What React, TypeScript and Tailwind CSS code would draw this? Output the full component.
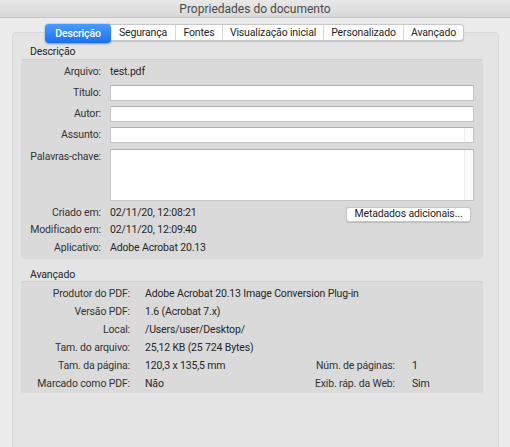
import React from "react";

const tabs = [
  { name: "Descrição", w: 66, active: true },
  { name: "Segurança", w: 64 },
  { name: "Fontes", w: 47 },
  { name: "Visualização inicial", w: 101 },
  { name: "Personalizado", w: 80 },
  { name: "Avançado", w: 60 },
];

function Label({ children, top = false }: { children: React.ReactNode; top?: boolean }) {
  return (
    <div className={`w-[80px] shrink-0 text-right text-[#333333] ${top ? "self-start pt-[1px]" : ""}`}>{children}</div>
  );
}

function Field() {
  return <div className="flex-1 h-[16px] bg-white border border-[#c4c4c4] border-t-[#b0b0b0]" />;
}

export default function App() {
  return (
    <div
      className="w-[510px] h-[447px] overflow-hidden whitespace-nowrap bg-[#ececec] text-[10.5px] tracking-[-0.15px] leading-[14px] text-[#262626]"
      style={{ fontFamily: "Roboto, 'Liberation Sans', sans-serif" }}
    >
      {/* title bar */}
      <div className="h-[18px] bg-gradient-to-b from-[#e8e8e8] to-[#d9d9d9] border-b border-[#c3c3c3] flex items-center justify-center text-[12px] tracking-[0px] text-[#4a4a4a]">
        Propriedades do documento
      </div>

      <div className="pl-[12px] pr-[11px] pt-[6px]">
        {/* tabs */}
        <div className="relative z-10 flex justify-start pl-[33px] h-[17px]">
          <div className="flex h-[17px] rounded-[4px] bg-white border border-[#c8c8c8] shadow-[0_0.5px_1px_rgba(0,0,0,0.15)]">
            {tabs.map((t, i) =>
              t.active ? (
                <div
                  key={t.name}
                  className="-my-[1px] -ml-[1px] h-[19px] flex items-center justify-center rounded-[4px] bg-gradient-to-b from-[#4a9bfb] to-[#1a6ff0] text-white font-medium shadow-[0_0.5px_2px_rgba(0,80,200,0.5)]"
                  style={{ width: t.w }}
                >
                  {t.name}
                </div>
              ) : (
                <div
                  key={t.name}
                  className={`flex items-center justify-center text-[#262626] ${i > 1 ? "border-l border-[#d6d6d6]" : ""}`}
                  style={{ width: t.w }}
                >
                  {t.name}
                </div>
              )
            )}
          </div>
        </div>

        {/* panel */}
        <div className="-mt-[9px] h-[430px] bg-[#e4e4e4] border border-[#d7d7d7] rounded-[4px] pl-[8px] pr-[15px] pt-[12px]">
          <div className="pl-[9px] h-[14px]">Descrição</div>
          <div className="bg-[#dadada] border-t border-[#d0d0d0] rounded-[2px] pt-[4px] pb-[3px] pr-[9px]">
            <div className="flex items-center gap-[9px] h-[16px]">
              <Label>Arquivo:</Label>
              <div>test.pdf</div>
            </div>
            <div className="flex items-center gap-[9px] mt-[5px]">
              <Label>Título:</Label>
              <Field />
            </div>
            <div className="flex items-center gap-[9px] mt-[5px]">
              <Label>Autor:</Label>
              <Field />
            </div>
            <div className="flex items-center gap-[9px] mt-[5px]">
              <Label>Assunto:</Label>
              <div className="flex-1 h-[16px] bg-white border border-[#c4c4c4] border-t-[#b0b0b0] flex justify-end">
                <div className="w-[9px] h-full border-l border-[#ececec] bg-[#fbfbfb]" />
              </div>
            </div>
            <div className="flex gap-[9px] mt-[6px]">
              <Label top>Palavras-chave:</Label>
              <div className="flex-1 h-[52px] bg-white border border-[#c4c4c4] border-t-[#b0b0b0] flex justify-end">
                <div className="w-[9px] h-full border-l border-[#ececec] bg-[#fbfbfb]" />
              </div>
            </div>
            <div className="flex items-center gap-[9px] mt-[4px] h-[16px]">
              <Label>Criado em:</Label>
              <div className="flex-1">02/11/20, 12:08:21</div>
              <div className="mr-[3px] mt-[2px] w-[125px] h-[15px] flex items-center justify-center bg-white rounded-[3px] border border-[#c6c6c6] shadow-[0_0.5px_1px_rgba(0,0,0,0.15)] text-[#262626]">
                Metadados adicionais...
              </div>
            </div>
            <div className="flex items-center gap-[9px] mt-[1px] h-[16px]">
              <Label>Modificado em:</Label>
              <div>02/11/20, 12:09:40</div>
            </div>
            <div className="flex items-center gap-[9px] mt-[2px] h-[16px]">
              <Label>Aplicativo:</Label>
              <div>Adobe Acrobat 20.13</div>
            </div>
          </div>

          <div className="pl-[9px] h-[13px] mt-[9px] leading-[13px]">Avançado</div>
          <div className="bg-[#dadada] border-t border-[#d0d0d0] rounded-[2px] pt-[3px]">
            {[
              ["Produtor do PDF:", "Adobe Acrobat 20.13 Image Conversion Plug-in", "", ""],
              ["Versão PDF:", "1.6 (Acrobat 7.x)", "", ""],
              ["Local:", "/Users/user/Desktop/", "", ""],
              ["Tam. do arquivo:", "25,12 KB (25 724 Bytes)", "", ""],
              ["Tam. da página:", "120,3 x 135,5 mm", "Núm. de páginas:", "1"],
              ["Marcado como PDF:", "Não", "Exib. ráp. da Web:", "Sim"],
            ].map(([l, v, rl, rv]) => (
              <div key={l} className="flex items-center h-[18px]">
                <div className="w-[109px] shrink-0 text-right text-[#333333]">{l}</div>
                <div className="ml-[15px] w-[150px] shrink-0">{v}</div>
                {rl && (
                  <>
                    <div className="w-[100px] shrink-0 text-right text-[#333333]">{rl}</div>
                    <div className="ml-[17px]">{rv}</div>
                  </>
                )}
              </div>
            ))}
          </div>
        </div>
      </div>
    </div>
  );
}
